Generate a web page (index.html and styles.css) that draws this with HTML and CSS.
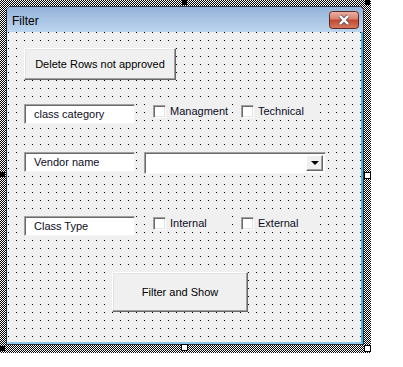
FILE: index.html
```html
<!DOCTYPE html>
<html>
<head>
    <title>Filter</title>
    <link rel="stylesheet" href="styles.css">
</head>
<body>
    <div class="selection">
        <div class="dialog">
            <div class="titlebar">
                <span class="title">Filter</span>
                <span class="close-btn">
                    <svg width="30" height="18" viewBox="0 0 30 18">
                        <defs>
                            <linearGradient id="closeGrad" x1="0" y1="0" x2="0" y2="1">
                                <stop offset="0" stop-color="#ebb3a6"/>
                                <stop offset="0.45" stop-color="#d9806d"/>
                                <stop offset="0.5" stop-color="#c4462f"/>
                                <stop offset="1" stop-color="#d87a61"/>
                            </linearGradient>
                        </defs>
                        <rect x="0.5" y="0.5" width="29" height="17" rx="3" fill="url(#closeGrad)" stroke="#5c2a26"/>
                        <path d="M11 5 L19 13 M19 5 L11 13" stroke="#5d5d5d" stroke-width="4.2"/>
                        <path d="M11 5 L19 13 M19 5 L11 13" stroke="#fff" stroke-width="2.4"/>
                    </svg>
                </span>
            </div>

            <!-- form designer area -->
            <div class="client">
                <div class="row row-delete">
                    <div class="btn btn-delete">Delete Rows not approved</div>
                </div>

                <div class="row row-category">
                    <div class="lbl">class category</div>
                    <div class="chk"><span class="box"></span>Managment</div>
                    <div class="chk"><span class="box"></span>Technical</div>
                </div>

                <div class="row row-vendor">
                    <div class="lbl">Vendor name</div>
                    <div class="combo">
                        <span class="combo-btn"><span class="arrow"></span></span>
                    </div>
                </div>

                <div class="row row-type">
                    <div class="lbl">Class Type</div>
                    <div class="chk"><span class="box"></span>Internal</div>
                    <div class="chk"><span class="box"></span>External</div>
                </div>

                <div class="row row-show">
                    <div class="btn btn-show">Filter and Show</div>
                </div>
            </div>
        </div>

        <span class="handle dark h-top-mid"></span>
        <span class="handle dark h-top-right"></span>
        <span class="handle dark h-left-mid"></span>
        <span class="handle dark h-bottom-left"></span>
        <span class="handle light h-right-mid"></span>
        <span class="handle light h-bottom-mid"></span>
        <span class="handle light h-bottom-right"></span>
    </div>
</body>
</html>
```

FILE: styles.css
```css
/* userform designer */
body {
    margin: 0;
    background: #fff;
    font-family: "Liberation Sans", Arial, sans-serif;
    font-size: 11px;
    color: #000;
}

.selection {
    position: relative;
    width: 371px;
    height: 353px;
    box-sizing: border-box;
    padding: 6px 0 0 6px;
    background: repeating-conic-gradient(#000 0 25%, #fff 0 50%) 0 0 / 2px 2px;
}

.dialog {
    width: 358px;
    height: 339px;
    box-sizing: border-box;
    border: 1px solid #2b3541;
    border-radius: 5px 5px 0 0;
    display: flex;
    flex-direction: column;
    background: #f0f0f0;
}

.titlebar {
    flex: none;
    height: 25px;
    box-sizing: border-box;
    padding: 3px 4px 0 5px;
    display: flex;
    justify-content: space-between;
    align-items: flex-start;
    background: linear-gradient(#93b1d7, #bdd6ef);
    border-radius: 4px 4px 0 0;
}

.title {
    font-size: 12px;
    line-height: 22px;
    color: #000;
}

.close-btn {
    display: block;
    width: 30px;
    height: 18px;
    margin-top: 1px;
}

.close-btn svg {
    display: block;
}

.client {
    flex: 1;
    border-left: 1px solid #e4ebf2;
    border-right: 2px solid #45b3e8;
    border-bottom: 2px solid #8fc6ea;
    padding: 16px 0 0 16px;
    background: #f0f0f0 conic-gradient(at 1px 1px, transparent 75%, #000 0) 0 0 / 8px 8px;
}

.row {
    display: flex;
    align-items: flex-start;
}

.row-category {
    margin-top: 24px;
}

.row-vendor {
    margin-top: 28px;
}

.row-type {
    margin-top: 42px;
}

.row-show {
    margin-top: 36px;
    margin-left: 88px;
}

/* raised buttons */
.btn {
    box-sizing: border-box;
    display: flex;
    align-items: center;
    justify-content: center;
    background: #f0f0f0;
    border: 1px solid;
    border-color: #fff #696969 #696969 #fff;
    box-shadow: inset -1px -1px #a0a0a0, inset 1px 1px #e3e3e3;
}

.btn-delete {
    width: 152px;
    height: 32px;
}

.btn-show {
    width: 136px;
    height: 40px;
}

/* sunken labels */
.lbl {
    width: 111px;
    height: 20px;
    box-sizing: border-box;
    padding-left: 9px;
    line-height: 18px;
    background: #fff;
    border: 1px solid;
    border-color: #a0a0a0 #f4f4f4 #f4f4f4 #a0a0a0;
    box-shadow: inset 1px 1px #696969;
    color: #0c0c24;
}

.chk {
    display: flex;
    align-items: center;
    width: 80px;
    height: 18px;
    margin-top: -2px;
    margin-right: 8px;
    padding-left: 2px;
    box-sizing: border-box;
    background: #f0f0f0;
    color: #0c0c24;
}

.row .lbl + .chk {
    margin-left: 16px;
}

.box {
    width: 13px;
    height: 13px;
    box-sizing: border-box;
    margin-right: 4px;
    background: #fff;
    border: 1px solid;
    border-color: #a0a0a0 #fff #fff #a0a0a0;
    box-shadow: inset 1px 1px #696969, inset -1px -1px #e3e3e3;
}

.combo {
    width: 182px;
    height: 22px;
    margin-left: 9px;
    box-sizing: border-box;
    padding: 2px;
    display: flex;
    justify-content: flex-end;
    background: #fff;
    border: 1px solid;
    border-color: #a0a0a0 #f4f4f4 #f4f4f4 #a0a0a0;
    box-shadow: inset 1px 1px #696969;
}

.combo-btn {
    width: 17px;
    box-sizing: border-box;
    display: flex;
    align-items: center;
    justify-content: center;
    background: #f0f0f0;
    border: 1px solid;
    border-color: #fff #696969 #696969 #fff;
    box-shadow: inset -1px -1px #a0a0a0;
}

.arrow {
    width: 0;
    height: 0;
    border-left: 4px solid transparent;
    border-right: 4px solid transparent;
    border-top: 4px solid #000;
}

/* selection handles */
.handle {
    position: absolute;
    box-sizing: border-box;
}

.handle.dark {
    width: 5px;
    height: 5px;
    background: #000;
}

.handle.light {
    width: 7px;
    height: 7px;
    background: #fff;
    border: 1px solid #000;
}

.h-top-mid { left: 182px; top: 0; }
.h-top-right { left: 365px; top: 0; }
.h-left-mid { left: 0; top: 172px; }
.h-bottom-left { left: 0; top: 346px; }
.h-right-mid { left: 364px; top: 172px; }
.h-bottom-mid { left: 181px; top: 344px; }
.h-bottom-right { left: 364px; top: 345px; }
```
